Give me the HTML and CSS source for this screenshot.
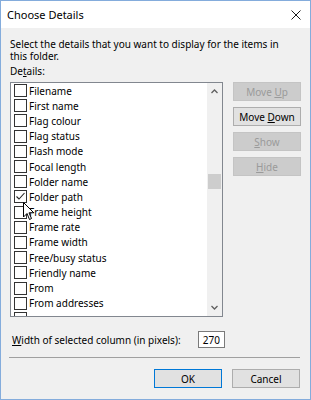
FILE: index.html
```html
<!DOCTYPE html>
<html lang="en">
<head>
    <meta charset="UTF-8">
    <title>Choose Details</title>
    <link rel="stylesheet" href="styles.css">
</head>
<body>

<div class="window">
    <div class="titlebar">
        <span class="title">Choose Details</span>
        <svg class="close" width="10" height="10" viewBox="0 0 10 10">
            <path d="M0.5 0.5 L9.5 9.5 M9.5 0.5 L0.5 9.5" stroke="#1a1a1a" stroke-width="1" fill="none"/>
        </svg>
    </div>

    <div class="content">
        <p class="intro">Select the details that you want to display for the items in this folder.</p>
        <p class="label">De<u>t</u>ails:</p>

        <div class="main">
            <div class="listbox">
                <ul class="items">
                    <li><span class="box"></span>Filename</li>
                    <li><span class="box"></span>First name</li>
                    <li><span class="box"></span>Flag colour</li>
                    <li><span class="box"></span>Flag status</li>
                    <li><span class="box"></span>Flash mode</li>
                    <li><span class="box"></span>Focal length</li>
                    <li><span class="box"></span>Folder name</li>
                    <li><span class="box checked"><svg width="11" height="11" viewBox="0 0 11 11"><path d="M1.5 5.5 L4 8 L9.5 2" stroke="#222" stroke-width="1.1" fill="none"/></svg></span>Folder path</li>
                    <li><span class="box"></span>Frame height</li>
                    <li><span class="box"></span>Frame rate</li>
                    <li><span class="box"></span>Frame width</li>
                    <li><span class="box"></span>Free/busy status</li>
                    <li><span class="box"></span>Friendly name</li>
                    <li><span class="box"></span>From</li>
                    <li><span class="box"></span>From addresses</li>
                    <li><span class="box"></span></li>
                </ul>
                <div class="scrollbar">
                    <svg class="arrow" width="15" height="15" viewBox="0 0 15 15">
                        <path d="M4.5 9 L7.5 6 L10.5 9" stroke="#606060" stroke-width="1.3" fill="none"/>
                    </svg>
                    <div class="track">
                        <div class="thumb"></div>
                    </div>
                    <svg class="arrow" width="15" height="15" viewBox="0 0 15 15">
                        <path d="M4.5 6 L7.5 9 L10.5 6" stroke="#606060" stroke-width="1.3" fill="none"/>
                    </svg>
                </div>
                <svg class="cursor" width="12" height="19" viewBox="0 0 12 19">
                    <path d="M0.5 0.5 L0.5 15 L4 11.5 L6.5 17.5 L8.5 16.5 L6 10.8 L10.8 10.8 Z" fill="#fff" stroke="#000" stroke-width="1"/>
                </svg>
            </div>

            <div class="side">
                <button class="btn" disabled>Move <u>U</u>p</button>
                <button class="btn">Move <u>D</u>own</button>
                <button class="btn" disabled><u>S</u>how</button>
                <button class="btn" disabled><u>H</u>ide</button>
            </div>
        </div>

        <div class="width-row">
            <span><u>W</u>idth of selected column (in pixels):</span>
            <input class="num" type="text" value="270">
        </div>
    </div>

    <div class="footer">
        <button class="btn default">OK</button>
        <button class="btn">Cancel</button>
    </div>
</div>

</body>
</html>
```

FILE: styles.css
```css
body {
    margin: 0;
    background: #fff;
    font-family: "Noto Sans", "Open Sans", sans-serif;
    font-size: 10px;
    color: #000;
}
.window {
    width: 311px;
    height: 400px;
    box-sizing: border-box;
    border: 1px solid #84acdc;
    background: #f0f0f0;
    display: flex;
    flex-direction: column;
}
.titlebar {
    height: 26px;
    background: #fff;
    display: flex;
    align-items: center;
    justify-content: space-between;
    padding: 0 9px 1px 6px;
}
.title {
    font-size: 11px;
}
.close {
    margin-top: 1px;
}
.content {
    padding: 10px 8px 0 9px;
}
.intro {
    margin: 0;
    line-height: 12px;
    width: 270px;
}
.label {
    margin: 3px 0 5px;
    line-height: 12px;
}
.main {
    display: flex;
    gap: 10px;
}
.listbox {
    position: relative;
    width: 213px;
    height: 235px;
    box-sizing: border-box;
    border: 1px solid #82878f;
    background: #fff;
    display: flex;
    overflow: hidden;
}
.items {
    list-style: none;
    margin: 0;
    padding: 0;
    flex: 1;
}
.items li {
    height: 15.2px;
    display: flex;
    align-items: center;
    padding-left: 3px;
}
.box {
    width: 13px;
    height: 13px;
    box-sizing: border-box;
    border: 1px solid #333;
    background: #fff;
    margin-right: 2px;
    display: flex;
    align-items: center;
    justify-content: center;
}
.scrollbar {
    width: 15px;
    background: #f0f0f0;
    display: flex;
    flex-direction: column;
}
.arrow {
    display: block;
    height: 17px;
}
.track {
    flex: 1;
    padding-top: 74px;
}
.thumb {
    height: 15px;
    margin: 0 1px;
    background: #cdcdcd;
}
.cursor {
    position: absolute;
    left: 12px;
    top: 119px;
}
.side {
    display: flex;
    flex-direction: column;
    gap: 6px;
}
.btn {
    width: 68px;
    height: 19px;
    box-sizing: border-box;
    border: 1px solid #adadad;
    background: #e1e1e1;
    font-family: "Noto Sans", "Open Sans", sans-serif;
    font-size: 10px;
    color: #000;
    padding: 0;
}
.btn:disabled {
    background: #cccccc;
    border-color: #c4c4c4;
    color: #9a9a9a;
}
.width-row {
    display: flex;
    align-items: center;
    margin-top: 14px;
    height: 17px;
}
.width-row span {
    width: 186px;
    padding-left: 2px;
}
.num {
    width: 27px;
    height: 17px;
    box-sizing: border-box;
    border: 1px solid #7a7a7a;
    font-family: "Noto Sans", "Open Sans", sans-serif;
    font-size: 10px;
    text-align: right;
    padding: 0 4px 0 0;
    background: #fff;
}
.footer {
    margin: 9px 10px 0 8px;
    border-top: 1px solid #a0a0a0;
    display: flex;
    justify-content: flex-end;
    gap: 10px;
    padding-top: 11px;
}
.btn.default {
    border-color: #0078d7;
}
```
